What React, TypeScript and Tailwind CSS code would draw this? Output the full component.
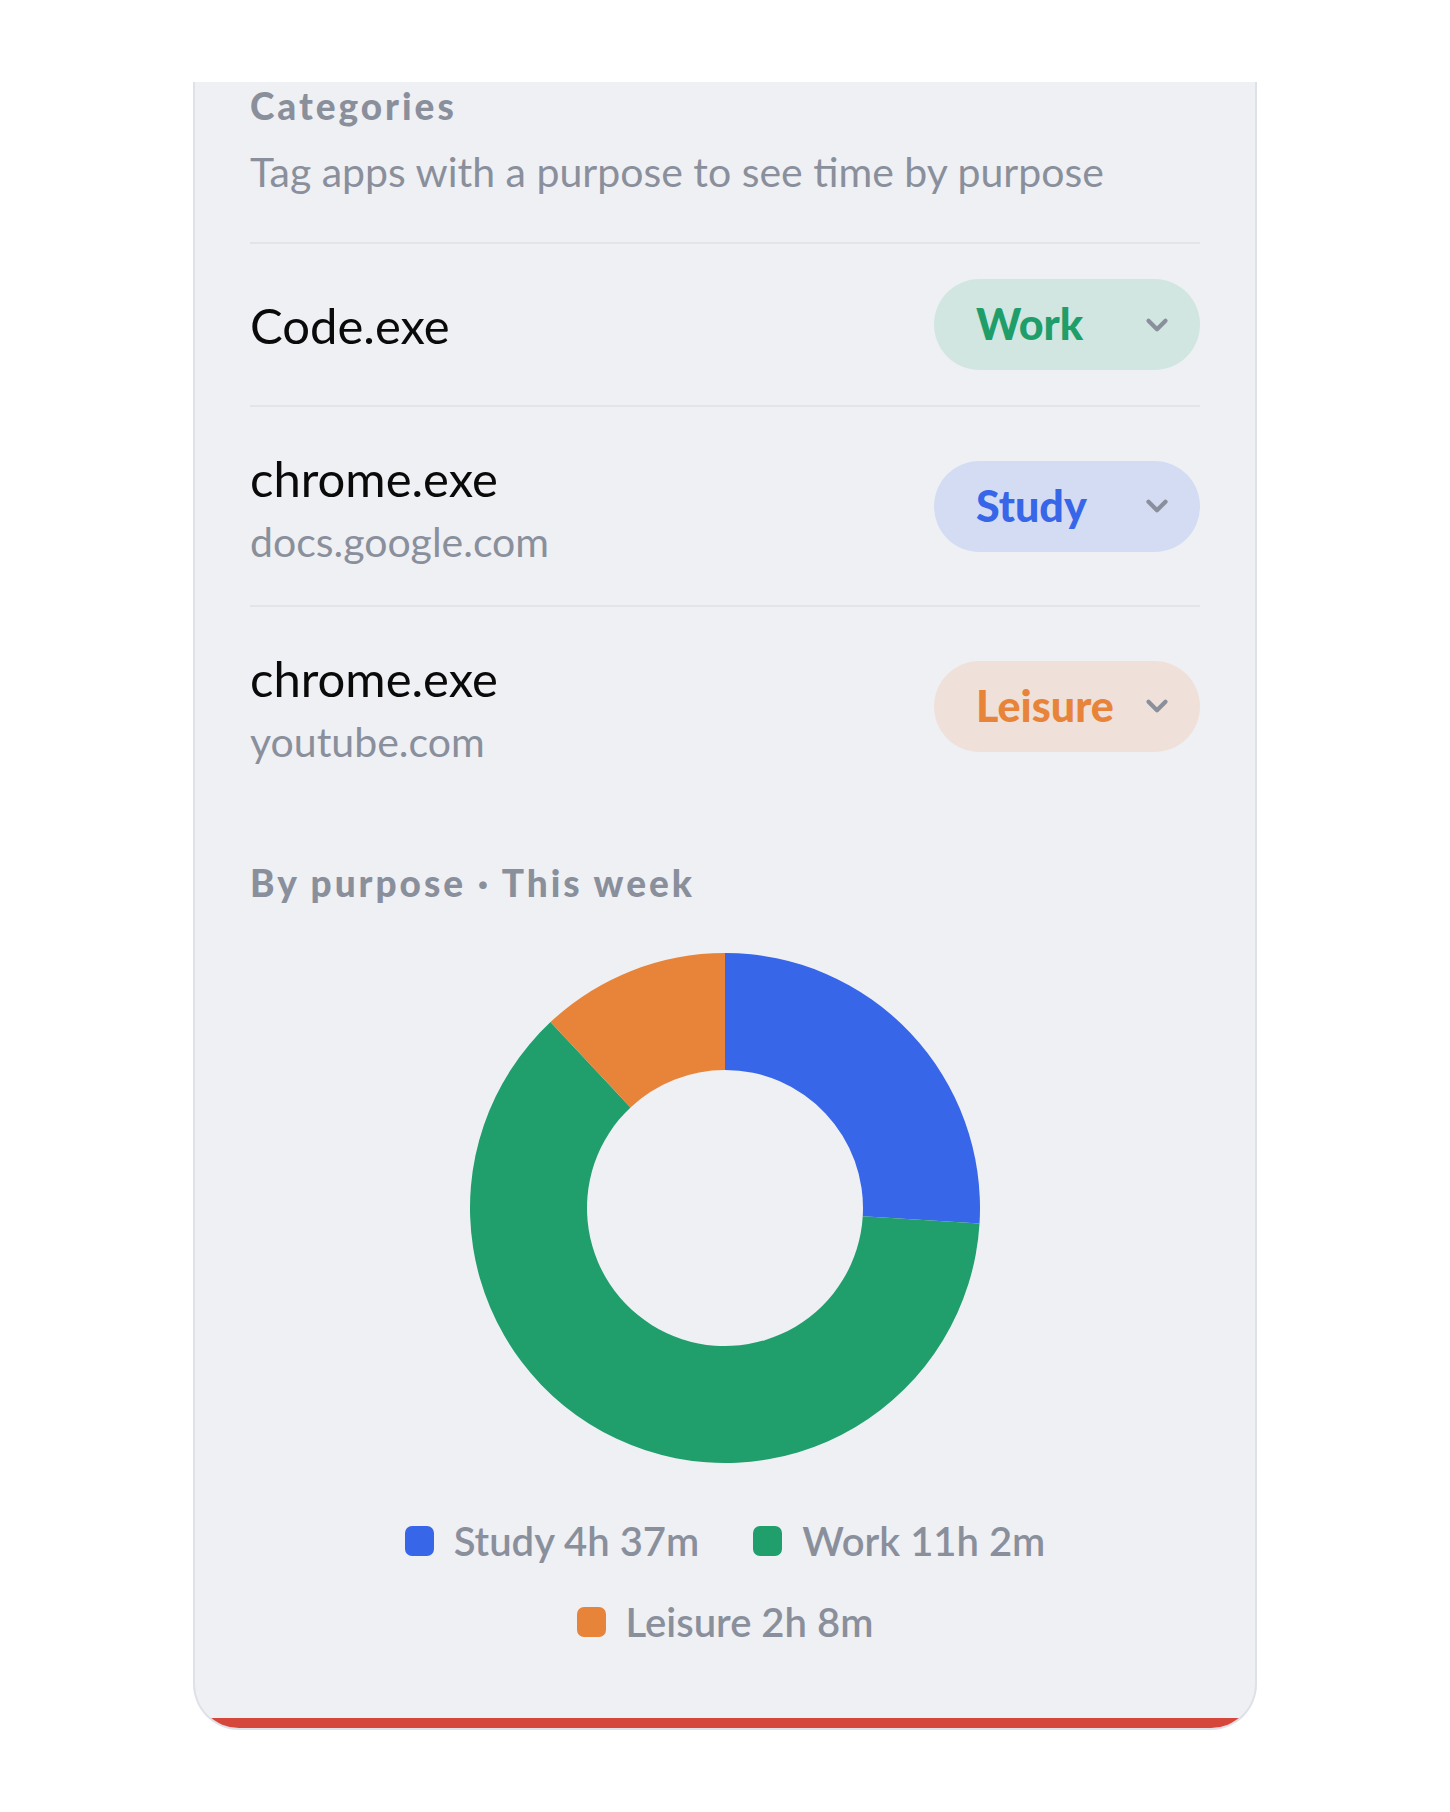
import { ChevronDown } from "lucide-react";

type Tag = "Work" | "Study" | "Leisure";

interface AppRow {
  name: string;
  domain?: string;
  tag: Tag;
}

const rows: AppRow[] = [
  { name: "Code.exe", tag: "Work" },
  { name: "chrome.exe", domain: "docs.google.com", tag: "Study" },
  { name: "chrome.exe", domain: "youtube.com", tag: "Leisure" },
];

const pillStyle: Record<Tag, string> = {
  Work: "bg-[#d1e6e0] text-[#1f9e6a]",
  Study: "bg-[#d3dcf3] text-[#3766e8]",
  Leisure: "bg-[#efe1da] text-[#e8843a]",
};

// minutes per purpose this week
const slices = [
  { label: "Study", value: "4h 37m", minutes: 277, color: "#3766e8" },
  { label: "Work", value: "11h 2m", minutes: 662, color: "#209f6d" },
  { label: "Leisure", value: "2h 8m", minutes: 128, color: "#e8843a" },
];

function arc(cx: number, cy: number, ro: number, ri: number, a0: number, a1: number) {
  const p = (r: number, a: number) => {
    const t = ((a - 90) * Math.PI) / 180;
    return `${cx + r * Math.cos(t)} ${cy + r * Math.sin(t)}`;
  };
  const large = a1 - a0 > 180 ? 1 : 0;
  return [
    `M ${p(ro, a0)}`,
    `A ${ro} ${ro} 0 ${large} 1 ${p(ro, a1)}`,
    `L ${p(ri, a1)}`,
    `A ${ri} ${ri} 0 ${large} 0 ${p(ri, a0)}`,
    "Z",
  ].join(" ");
}

function Donut() {
  const total = slices.reduce((s, x) => s + x.minutes, 0);
  let start = 0;
  return (
    <svg width="510" height="510" viewBox="0 0 510 510">
      {slices.map(s => {
        const end = start + (s.minutes / total) * 360;
        const d = arc(255, 255, 255, 138, start, end);
        start = end;
        return <path key={s.label} d={d} fill={s.color} />;
      })}
    </svg>
  );
}

function TagPill({ tag }: { tag: Tag }) {
  return (
    <div
      className={`flex h-[91px] w-[266px] shrink-0 items-center justify-between rounded-full pl-[42px] pr-[26px] text-[43px] font-black ${pillStyle[tag]}`}
    >
      <span>{tag}</span>
      <ChevronDown className="h-[34px] w-[34px] text-[#8a8f9c]" strokeWidth={3} />
    </div>
  );
}

export default function App() {
  return (
    <div className="min-h-[1812px] bg-white pt-[82px] font-['Lato',sans-serif]">
      <div className="mx-auto w-[1064px] overflow-hidden rounded-b-[46px] border-x-2 border-b-2 border-[#dfe1e8] bg-[#eff0f4]">
        <div className="px-[55px]">
          {/* Header */}
          <div className="border-b-2 border-[#e2e4ea] pb-[40px]">
            <h2 className="text-[37px] font-black leading-[48px] tracking-[0.08em] text-[#8a8f9c]">Categories</h2>
            <p className="mt-[12px] text-[41px] leading-[60px] text-[#8a8f9c]">
              Tag apps with a purpose to see time by purpose
            </p>
          </div>

          {/* App rows */}
          <div className="divide-y-2 divide-[#e2e4ea]">
            {rows.map((r, i) => (
              <div key={i} className="flex items-center justify-between py-[35px]">
                <div>
                  <div className="text-[49px] leading-[72px] text-[#0a0a0a]">{r.name}</div>
                  {r.domain && <div className="text-[41px] leading-[56px] text-[#8a8f9c]">{r.domain}</div>}
                </div>
                <TagPill tag={r.tag} />
              </div>
            ))}
          </div>

          {/* Chart */}
          <h3 className="mt-[54px] text-[37px] font-black leading-[48px] tracking-[0.08em] text-[#8a8f9c]">
            By purpose · This week
          </h3>
          <div className="mt-[46px] flex justify-center">
            <Donut />
          </div>

          <div className="mt-[50px] flex flex-wrap justify-center gap-x-[54px] gap-y-[25px] pb-[68px]">
            {slices.map(s => (
              <div key={s.label} className="flex items-center gap-[20px] text-[40px] font-semibold leading-[56px] text-[#8a8f9c]">
                <span className="h-[30px] w-[29px] rounded-[7px]" style={{ backgroundColor: s.color }} />
                <span>
                  {s.label} {s.value}
                </span>
              </div>
            ))}
          </div>
        </div>
        <div className="h-[10px] bg-[#d6473b]" />
      </div>
    </div>
  );
}
